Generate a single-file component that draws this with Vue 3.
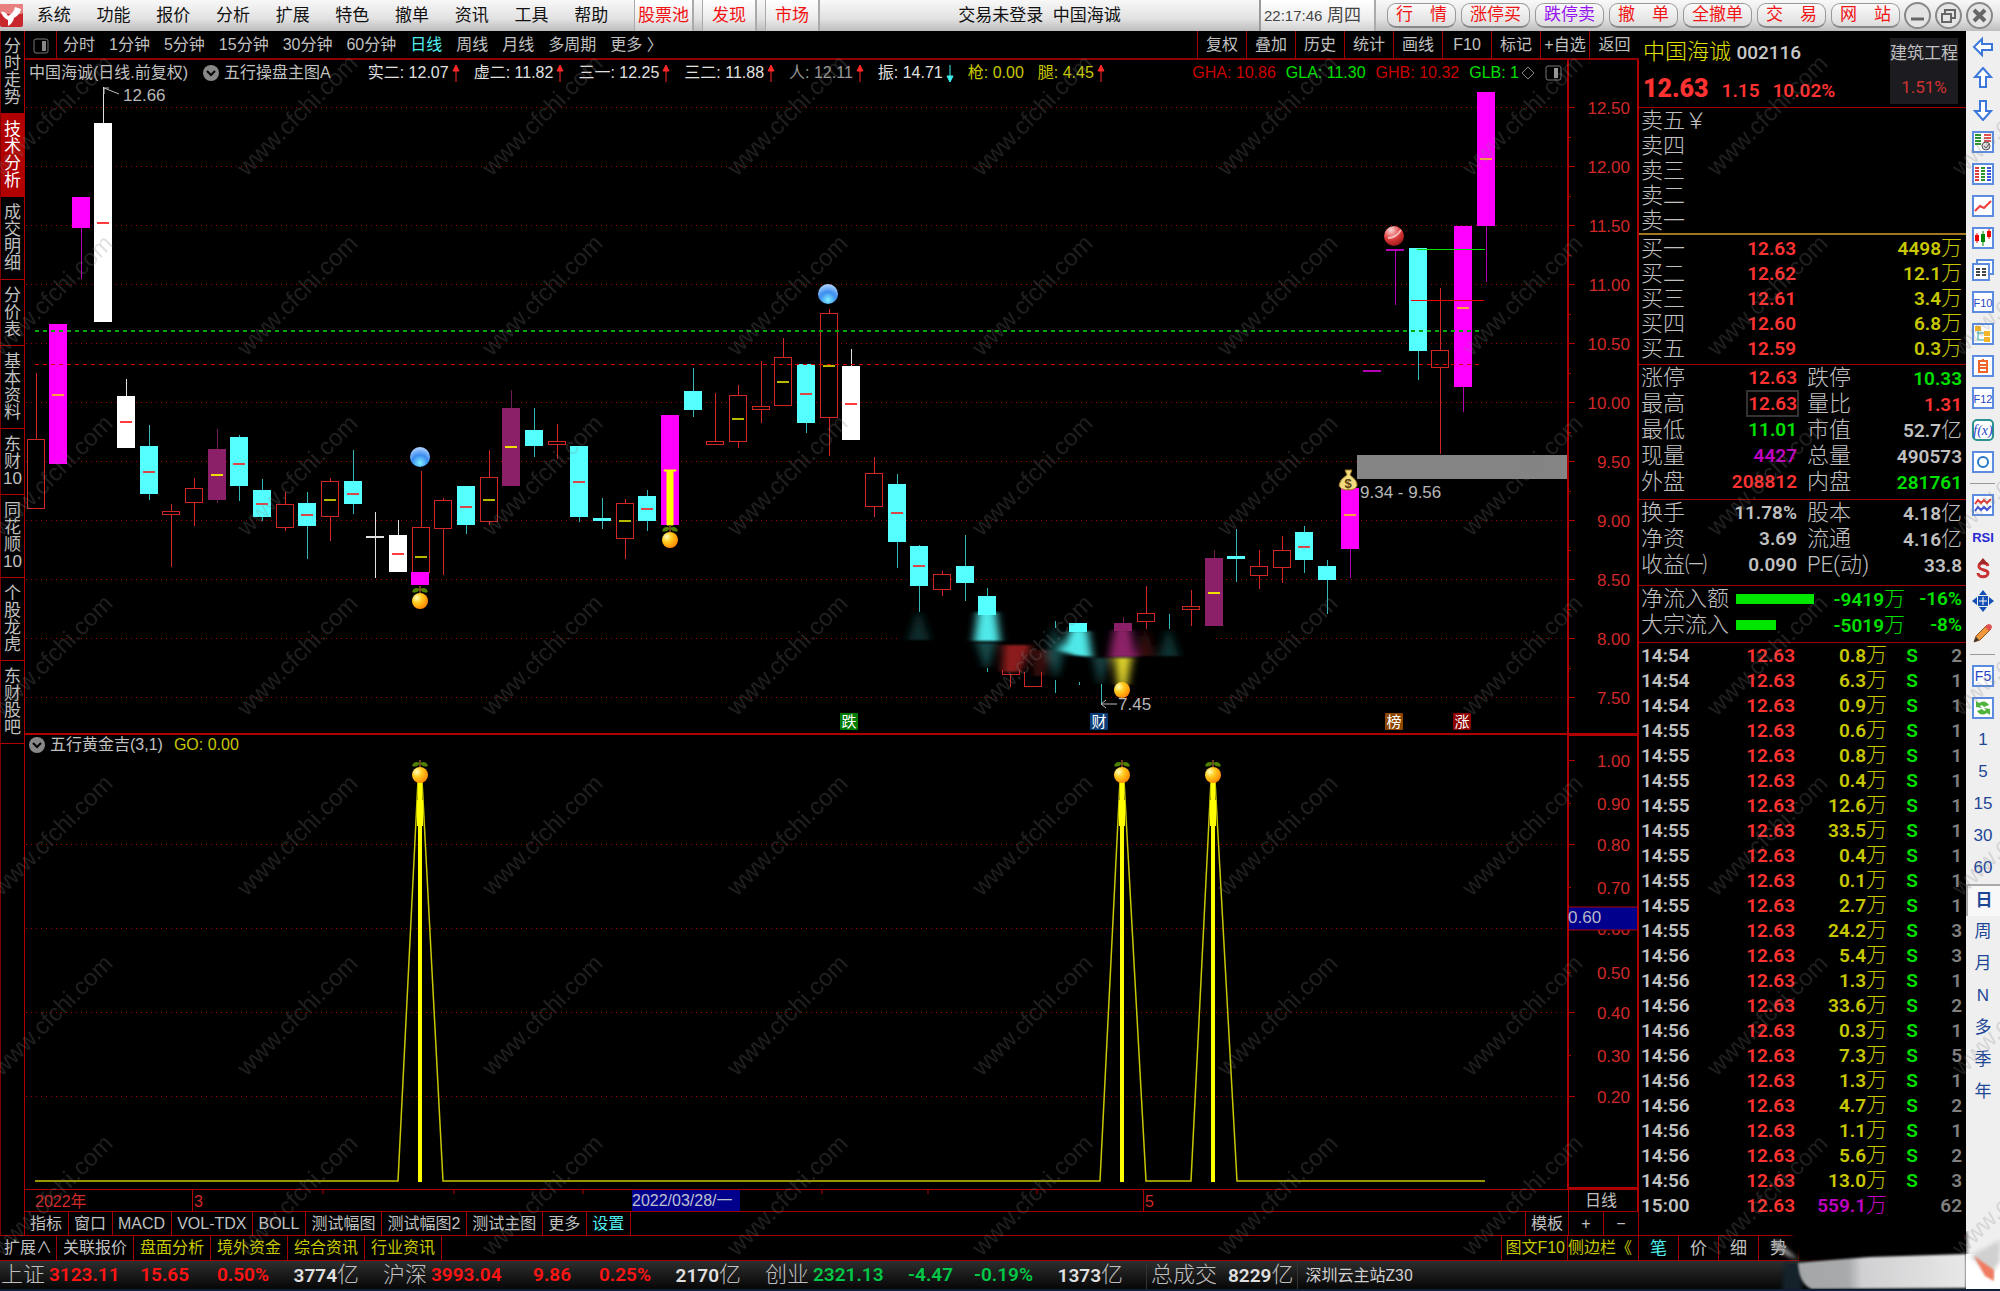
<script setup>
const menus = ['系统', '功能', '报价', '分析', '扩展', '特色', '撤单', '资讯', '工具', '帮助']
const hotMenus = ['股票池', '发现', '市场']
const tradeButtons = [
  { t: '行　情' }, { t: '涨停买' }, { t: '跌停卖', sell: true }, { t: '撤　单' },
  { t: '全撤单' }, { t: '交　易' }, { t: '网　站' },
]
const sideTabs = [
  ['分', '时', '走', '势'], ['技', '术', '分', '析'], ['成', '交', '明', '细'], ['分', '价', '表'],
  ['基', '本', '资', '料'], ['东', '财', '10'], ['同', '花', '顺', '10'], ['个', '股', '龙', '虎'],
  ['东', '财', '股', '吧'],
]
const periods = ['分时', '1分钟', '5分钟', '15分钟', '30分钟', '60分钟', '日线', '周线', '月线', '多周期', '更多 〉']
const tools = ['复权', '叠加', '历史', '统计', '画线', 'F10', '标记', '+自选', '返回']
const readings = [
  { k: '实二', v: '12.07', d: 'up', c: 'white' }, { k: '虚二', v: '11.82', d: 'up', c: 'white' },
  { k: '三一', v: '12.25', d: 'up', c: 'white' }, { k: '三二', v: '11.88', d: 'up', c: 'white' },
  { k: '人', v: '12.11', d: 'up', c: 'dim' }, { k: '振', v: '14.71', d: 'down', c: 'white' },
  { k: '枪', v: '0.00', c: 'yellow' }, { k: '腿', v: '4.45', d: 'up', c: 'yellow' },
]
const bands = [
  { k: 'GHA', v: '10.86', c: 'darkred' }, { k: 'GLA', v: '11.30', c: 'green' },
  { k: 'GHB', v: '10.32', c: 'darkred' }, { k: 'GLB', v: '1', c: 'green' },
]

const CANDLE_START = 35.5
const CANDLE_STEP = 22.66
// index, kind, high, body top, body bottom, low, average mark
const candleRows = [
  [0, 'r', 373, 439, 508, 508], [1, 'm', 324, 324, 463, 463, 394], [2, 'm', 197, 197, 227, 279],
  [3, 'w', 87, 123, 321, 321, 222], [4, 'w', 379, 396, 447, 447, 421], [5, 'c', 425, 446, 493, 500, 471],
  [6, 'r', 504, 511, 514, 567], [7, 'r', 478, 488, 502, 526], [8, 'p', 429, 449, 499, 503, 474],
  [9, 'c', 435, 437, 485, 501, 463], [10, 'c', 479, 490, 516, 521, 503], [11, 'r', 492, 504, 527, 531],
  [12, 'c', 492, 503, 525, 559, 514], [13, 'r', 478, 481, 516, 541, 499], [14, 'c', 450, 481, 503, 514, 493],
  [15, 'w', 512, 536, 537, 578], [16, 'w', 520, 535, 571, 571, 553], [17, 'r', 471, 527, 572, 572, 556],
  [18, 'r', 498, 500, 528, 575], [19, 'c', 486, 486, 524, 534, 506], [20, 'r', 450, 477, 521, 525, 499],
  [21, 'p', 390, 408, 485, 485, 446], [22, 'c', 408, 430, 445, 457], [23, 'r', 424, 441, 444, 459],
  [24, 'c', 446, 446, 516, 522, 481], [25, 'c', 498, 518, 520, 529], [26, 'r', 499, 503, 538, 559, 520],
  [27, 'c', 490, 496, 520, 531, 508], [28, 'm', 415, 415, 524, 524], [29, 'c', 368, 391, 409, 417],
  [30, 'r', 393, 441, 444, 445], [31, 'r', 385, 395, 441, 448, 418], [32, 'r', 361, 406, 409, 423],
  [33, 'r', 338, 357, 405, 405, 381], [34, 'c', 364, 364, 422, 433, 393], [35, 'r', 309, 313, 417, 456, 365],
  [36, 'w', 349, 366, 439, 439, 403], [37, 'r', 457, 473, 506, 517], [38, 'c', 474, 484, 541, 568, 512],
  [39, 'c', 545, 546, 585, 612, 565], [40, 'r', 571, 574, 589, 596], [41, 'c', 535, 566, 582, 601],
  [42, 'c', 588, 596, 613, 613], [46, 'c', 623, 623, 631, 631], [48, 'p', 617, 623, 630, 630],
  [49, 'r', 586, 613, 621, 629], [51, 'r', 590, 606, 609, 626], [52, 'p', 550, 558, 625, 625, 592],
  [53, 'c', 529, 556, 558, 582], [54, 'r', 550, 566, 575, 589], [55, 'r', 536, 550, 567, 583],
  [56, 'c', 526, 532, 559, 573, 546], [57, 'c', 560, 566, 579, 614], [58, 'm', 488, 488, 548, 578, 514],
  [59, 'm', 370, 370, 371, 371], [60, 'm', 249, 249, 250, 305], [61, 'c', 248, 248, 350, 380],
  [62, 'r', 288, 350, 367, 454], [63, 'm', 226, 226, 386, 412, 307], [64, 'm', 92, 92, 225, 282, 158],
]
const fills = { m: '#ff00ff', w: '#ffffff', c: '#54ffff', p: '#8c2068', r: '#000000' }
const wicks = { m: '#b400b4', w: '#e0e0e0', c: '#36b8b8', p: '#6e1c54', r: '#d02626' }
const marks = { m: '#ffa040', w: '#ff3c3c', c: '#d84848', p: '#f0e000', r: '#b8b800' }
const candles = candleRows.map(([i, k, hi, top, bot, lo, mark]) => ({
  i, k, hi, top, bot, lo, mark, x: Math.round(CANDLE_START + i * CANDLE_STEP),
}))

const priceLevels = [
  ['12.50', 107], ['12.00', 166], ['11.50', 225], ['11.00', 284], ['10.50', 343], ['10.00', 402],
  ['9.50', 461], ['9.00', 520], ['8.50', 579], ['8.00', 638], ['7.50', 697],
]
const minorTicks = [137, 196, 255, 314, 373, 432, 491, 550, 609, 668]
const subLevels = [
  ['1.00', 761], ['0.90', 804], ['0.80', 845], ['0.70', 888], ['0.60', 929], ['0.50', 973],
  ['0.40', 1013], ['0.30', 1056], ['0.20', 1097],
]
const subGrid = [845, 929, 1013, 1097]
const spikes = [420, 1122, 1213]
const tags = [
  { x: 849, t: '跌', c: '#007a00' }, { x: 1099, t: '财', c: '#0a3c78' },
  { x: 1394, t: '榜', c: '#8c4600' }, { x: 1462, t: '涨', c: '#8c0000' },
]
const dateTicks = [323, 454, 583, 822, 928, 1037]

const indicatorTabs = ['指标', '窗口', 'MACD', 'VOL-TDX', 'BOLL', '测试幅图', '测试幅图2', '测试主图', '更多', '设置']
const extTabs = ['扩展∧', '关联报价', '盘面分析', '境外资金', '综合资讯', '行业资讯']

const asks = ['卖五', '卖四', '卖三', '卖二', '卖一']
const bids = [
  ['买一', '12.63', '4498', '万'], ['买二', '12.62', '12.1', '万'], ['买三', '12.61', '3.4', '万'],
  ['买四', '12.60', '6.8', '万'], ['买五', '12.59', '0.3', '万'],
]
const stats = [
  ['涨停', '12.63', 'red', '跌停', '10.33', 'green', ''],
  ['最高', '12.63', 'red boxed', '量比', '1.31', 'red', ''],
  ['最低', '11.01', 'green', '市值', '52.7', 'grey', '亿'],
  ['现量', '4427', 'purple', '总量', '490573', 'grey', ''],
  ['外盘', '208812', 'red', '内盘', '281761', 'green', ''],
]
const basics = [
  ['换手', '11.78%', 'grey', '股本', '4.18', 'grey', '亿'],
  ['净资', '3.69', 'grey', '流通', '4.16', 'grey', '亿'],
  ['收益㈠', '0.090', 'grey', 'PE(动)', '33.8', 'grey', ''],
]
const flows = [
  { k: '净流入额', w: 78, v: '-9419', p: '-16%' },
  { k: '大宗流入', w: 40, v: '-5019', p: '-8%' },
]
const ticks = [
  ['14:54', '0.8', 2], ['14:54', '6.3', 1], ['14:54', '0.9', 1], ['14:55', '0.6', 1], ['14:55', '0.8', 1],
  ['14:55', '0.4', 1], ['14:55', '12.6', 1], ['14:55', '33.5', 1], ['14:55', '0.4', 1], ['14:55', '0.1', 1],
  ['14:55', '2.7', 1], ['14:55', '24.2', 3], ['14:56', '5.4', 3], ['14:56', '1.3', 1], ['14:56', '33.6', 2],
  ['14:56', '0.3', 1], ['14:56', '7.3', 5], ['14:56', '1.3', 1], ['14:56', '4.7', 2], ['14:56', '1.1', 1],
  ['14:56', '5.6', 2], ['14:56', '13.0', 3], ['15:00', '559.1', 62],
]
const quoteTabs = ['笔', '价', '细', '势']
const indices = [
  { n: '上证', v: '3123.11', d: '15.65', p: '0.50%', a: '3774', c: 'up' },
  { n: '沪深', v: '3993.04', d: '9.86', p: '0.25%', a: '2170', c: 'up' },
  { n: '创业', v: '2321.13', d: '-4.47', p: '-0.19%', a: '1373', c: 'down' },
]

const frame = '<rect x="1" y="1" width="20" height="20" fill="#fff" stroke="#5b8ce0" stroke-width="2"/>'
const label = (t, size) => `${frame}<text x="11" y="16" text-anchor="middle" font-family="Liberation Sans" font-size="${size}" fill="#2846c8">${t}</text>`
const railIcons = [
  { n: '后退', s: '<path d="M2 11 L10 3 V8 H20 V14 H10 V19 Z" fill="#fff" stroke="#3c78dc" stroke-width="2"/>' },
  { n: '上移', s: '<path d="M11 1 L19 10 H14 V20 H8 V10 H3 Z" fill="#fff" stroke="#3c78dc" stroke-width="2"/>' },
  { n: '下移', s: '<path d="M11 21 L19 12 H14 V2 H8 V12 H3 Z" fill="#fff" stroke="#3c78dc" stroke-width="2"/>' },
  { n: '报价表', s: frame + '<path d="M3 4H9M3 7H9M3 10H9M3 13H9" stroke="#289628" stroke-width="2"/><path d="M12 4H19M12 7H19M12 10H19" stroke="#e05050" stroke-width="2"/><circle cx="14" cy="15" r="4" fill="#ddd" stroke="#555"/><path d="M12 15l2 2 3-4" fill="none" stroke="#555"/>' },
  { n: '多列表', s: frame + '<g fill="none" stroke-width="4" stroke-dasharray="2 1"><path d="M5 4V19" stroke="#e03c3c"/><path d="M11 4V19" stroke="#289628"/><path d="M17 4V19" stroke="#3c50dc"/></g>' },
  { n: '走势', s: frame + '<path d="M3 16 L8 11 L12 13 L19 6" fill="none" stroke="#f03c3c" stroke-width="2"/>' },
  { n: 'K线', s: frame + '<path d="M5 6V16M17 2V12" stroke="#e00" /><path d="M11 4V19" stroke="#080"/><rect x="3" y="8" width="4" height="6" fill="#e00"/><rect x="9" y="7" width="4" height="8" fill="#080"/><rect x="15" y="4" width="4" height="6" fill="#e00"/>' },
  { n: '多窗口', s: '<rect x="5" y="1" width="16" height="14" fill="#fff" stroke="#5b8ce0" stroke-width="2"/><rect x="1" y="5" width="16" height="16" fill="#fff" stroke="#5b8ce0" stroke-width="2"/><path d="M4 10H8M10 10H14M4 13H8M10 13H14M4 16H8M10 16H14" stroke="#444" stroke-width="2"/>' },
  { n: 'F10', s: label('F10', 11) },
  { n: '目录树', s: frame + '<path d="M6 7V17H14M6 10H14" fill="none" stroke="#28a0a0"/><rect x="3" y="3" width="6" height="5" fill="#f5b428"/><rect x="12" y="8" width="6" height="5" fill="#f5b428"/><rect x="12" y="14" width="6" height="5" fill="#f5b428"/>' },
  { n: '自选', s: frame + '<path d="M11 4V6M7 6H15V17H7ZM7 10H15M7 13H15" fill="none" stroke="#f06428" stroke-width="2"/>' },
  { n: 'F12', s: label('F12', 11) },
  { n: '公式', s: '<rect x="1" y="1" width="20" height="20" rx="4" fill="#fff" stroke="#2a9090" stroke-width="2"/><text x="11" y="16" text-anchor="middle" font-family="Liberation Serif" font-style="italic" font-size="14" fill="#2846c8">f(x)</text>' },
  { n: '圆形', s: frame + '<circle cx="11" cy="11" r="5" fill="none" stroke="#2878c8" stroke-width="2"/>' },
  { sep: true },
  { n: '叠加线', s: frame + '<path d="M3 10L6 6L9 9L12 6L15 9L19 5" fill="none" stroke="#e03c3c" stroke-width="2"/><path d="M3 17L6 13L9 16L12 13L15 16L19 12" fill="none" stroke="#3c50dc" stroke-width="2"/>' },
  { n: 'RSI', s: '<text x="11" y="16" text-anchor="middle" font-family="Liberation Sans" font-weight="700" font-size="13" fill="#2828d2">RSI</text>' },
  { n: '美元', s: '<path d="M16 8C15 4 6 4 7 9C8 13 16 11 16 15C16 20 6 20 6 15" fill="none" stroke="#c83232" stroke-width="3"/><path d="M11 0L16 6H6Z" fill="#a02828"/>' },
  { n: '移动', s: '<path d="M11 0L15 5H7ZM11 22L15 17H7ZM0 11L5 7V15ZM22 11L17 7V15Z" fill="#1450b4"/><rect x="6" y="6" width="10" height="10" fill="#1450b4"/><path d="M11 7V15M7 11H15" stroke="#fff"/>' },
  { n: '画笔', s: '<path d="M2 20L4 14L15 3L19 7L8 18Z" fill="#f0963c" stroke="#905020"/><path d="M13 5L15 3Q17 1 19 3T19 7L17 9Z" fill="#e05050"/><path d="M2 20L4 15L7 18Z" fill="#333"/>' },
  { sep: true },
  { n: 'F5', s: label('F5', 14) },
  { n: '刷新', s: frame + '<path d="M4 10V4L7 6Q13 2 17 8L12 10Q10 7 8 9L10 11ZM18 12V18L15 16Q9 20 5 14L10 12Q12 15 14 13L12 11Z" fill="#50b43c"/>' },
  ...['1', '5', '15', '30', '60', '日', '周', '月', 'N', '多', '季', '年'].map((t) => ({ n: t, text: t })),
]
</script>

<template>
  <div class="app">
    <header class="menubar">
      <svg class="logo" viewBox="0 0 23 23" aria-hidden="true">
        <rect width="23" height="23" rx="2" fill="#c8282c" />
        <rect width="23" height="10" rx="2" fill="#e88080" />
        <path d="M1 8 Q5 7 8 12 Q14 9 15 3 L21 5 Q20 11 14 14 Q13 19 8 22 L8 16 Q3 14 1 8Z" fill="#fff" />
      </svg>
      <nav class="menus"><button v-for="m in menus" :key="m">{{ m }}</button></nav>
      <div class="hots"><button v-for="m in hotMenus" :key="m">{{ m }}</button></div>
      <div class="caption">交易未登录&nbsp; 中国海诚</div>
      <div class="clock"><span>22:17:46</span> 周四</div>
      <div class="trades">
        <button v-for="b in tradeButtons" :key="b.t" :class="{ sell: b.sell }">{{ b.t }}</button>
      </div>
      <div class="winbtns">
        <button aria-label="最小化"><svg viewBox="2 2 23 23"><path d="M7 17H20" stroke="#666" stroke-width="3" /></svg></button>
        <button aria-label="还原"><svg viewBox="2 2 23 23"><path d="M10 11V8H20V16H17M7 12H16V20H7Z" fill="none" stroke="#666" stroke-width="2" /></svg></button>
        <button aria-label="关闭"><svg viewBox="2 2 23 23"><path d="M8 8L19 19M19 8L8 19" stroke="#666" stroke-width="4" /></svg></button>
      </div>
    </header>

    <div class="body">
      <div class="left">
        <div class="work">
          <nav class="sidetabs">
            <button v-for="(tab, n) in sideTabs" :key="n" :class="{ on: n === 1 }">
              <span v-for="ch in tab" :key="ch">{{ ch }}</span>
            </button>
          </nav>
          <main class="center">
            <div class="toolbar">
              <button class="split" aria-label="分栏">
                <svg width="18" height="18" viewBox="0 0 18 18"><rect x="2" y="2" width="14" height="14" rx="2" fill="none" stroke="#777" /><rect x="10" y="4" width="4" height="10" fill="#888" /></svg>
              </button>
              <div class="periods">
                <button v-for="p in periods" :key="p" :class="{ on: p === '日线' }">{{ p }}</button>
              </div>
              <div class="tools"><button v-for="t in tools" :key="t">{{ t }}</button></div>
            </div>

            <section class="pane main-pane">
              <div class="legend">
                <span class="symbol">中国海诚(日线.前复权)</span>
                <svg class="chev" viewBox="0 0 16 16" aria-hidden="true"><circle cx="8" cy="8" r="8" fill="#888" /><path d="M4 6L8 10L12 6" fill="none" stroke="#000" stroke-width="2" /></svg>
                <span class="formula">五行操盘主图A</span>
                <div class="readings">
                  <span v-for="r in readings" :key="r.k" :class="r.c">{{ r.k }}: {{ r.v
                    }}<svg v-if="r.d" :class="r.d" width="9" height="18" viewBox="0 0 9 18" aria-hidden="true"><path :d="r.d === 'up' ? 'M5 17V5M2 6L5 0L8 6Z' : 'M5 0V12M2 11L5 17L8 11Z'" stroke="currentColor" fill="currentColor" /></svg></span>
                </div>
                <div class="bands"><span v-for="b in bands" :key="b.k" :class="b.c">{{ b.k }}: {{ b.v }}</span></div>
                <svg class="legend-icons" width="44" height="20" viewBox="0 0 44 20" aria-hidden="true"><path d="M9 4L15 10L9 16L3 10Z" fill="none" stroke="#888" /><rect x="27" y="3" width="15" height="14" rx="2" fill="none" stroke="#777" /><rect x="35" y="5" width="4" height="10" fill="#999" /></svg>
                <div class="axis-head"></div>
              </div>
              <svg class="plot" viewBox="25 86 1614 647" preserveAspectRatio="none">
                <defs>
                  <radialGradient id="blue" cx=".5" cy=".8" r=".8"><stop offset="0" stop-color="#7ff0ff" /><stop offset=".5" stop-color="#3c8cf0" /><stop offset="1" stop-color="#b4d8ff" /></radialGradient>
                  <radialGradient id="orange" cx=".3" cy=".3" r=".8"><stop offset="0" stop-color="#ffffc0" /><stop offset=".4" stop-color="#ffcc20" /><stop offset="1" stop-color="#ff8000" /></radialGradient>
                  <radialGradient id="redball" cx=".35" cy=".2" r=".9"><stop offset="0" stop-color="#ffd8d8" /><stop offset=".5" stop-color="#e04040" /><stop offset="1" stop-color="#901010" /></radialGradient>
                  <filter id="soft" x="-20%" y="-20%" width="140%" height="140%"><feGaussianBlur stdDeviation="4 1" /></filter>
                </defs>
                <g stroke="#a00000" stroke-dasharray="1 4" class="crisp">
                  <path v-for="l in priceLevels" :key="l[0]" :d="`M26 ${l[1] + 0.5}H1562`" />
                </g>
                <g stroke="#b00000" class="crisp">
                  <path d="M1568 86V733" stroke-width="2" />
                  <path d="M1638 86V733" stroke-width="2" />
                  <path v-for="l in priceLevels" :key="l[0]" :d="`M1568 ${l[1] + 0.5}h7`" />
                  <path v-for="t in minorTicks" :key="t" :d="`M1568 ${t + 0.5}h3`" />
                </g>
                <g class="axis-text">
                  <text v-for="l in priceLevels" :key="l[0]" x="1630" :y="l[1] + 7">{{ l[0] }}</text>
                </g>
                <path d="M900 632H1215V646H900Z" fill="#000" />
                <g v-for="c in candles" :key="c.i" class="crisp">
                  <path :d="`M${c.x + 0.5} ${c.hi}V${c.lo}`" :stroke="wicks[c.k]" />
                  <rect v-if="c.k === 'r'" :x="c.x - 8.5" :y="c.top + 0.5" width="17" :height="c.bot - c.top" fill="#000" stroke="#d02626" />
                  <rect v-else :x="c.x - 9" :y="c.top" width="18" :height="c.bot - c.top + 1" :fill="c.bot - c.top < 2 ? wicks[c.k] : fills[c.k]" />
                  <rect v-if="c.mark" :x="c.x - 6" :y="c.mark" width="12" height="2" :fill="marks[c.k]" />
                </g>
                <rect x="411" y="572" width="18" height="13" fill="#f0f" />
                <path d="M664 470H676V471H673V525H667V471H664Z" fill="#ff0" stroke="#ff0" />

                <g filter="url(#soft)">
                  <path d="M917 612H920L930 640H908Z" fill="#0c2a2a" />
                  <path d="M978 612H996L1000 641H974Z" fill="#50e8e8" />
                  <path d="M976 643H996L988 668H985Z" fill="#164848" />
                  <path d="M1003 645H1031L1020 672H1002Z" fill="#8c1c1c" />
                  <path d="M1032 650H1052L1044 676H1034Z" fill="#3a0c0c" />
                  <path d="M1054 624L1064 652L1056 680L1048 655Z" fill="#164848" />
                  <path d="M1070 631H1088L1092 657L1072 655L1062 650Z" fill="#50e8e8" />
                  <path d="M1092 658H1110L1102 684H1099Z" fill="#123c3c" />
                  <path d="M1114 630H1131L1136 657H1109Z" fill="#8c2068" />
                  <path d="M1114 658H1132L1127 685H1118Z" fill="#dcd02c" />
                  <path d="M1143 630H1147L1155 656H1136Z" fill="#340c0c" />
                  <path d="M1167 630H1170L1179 656H1159Z" fill="#0f3232" />
                </g>
                <g class="crisp" fill="#54ffff"><rect x="978" y="606" width="18" height="9" /><rect x="1069" y="624" width="18" height="8" /></g>
                <g fill="none" class="crisp">
                  <path d="M1002 670V674.5H1019V670M1010.5 675V687M1024.5 672V686.5H1041.5V672" stroke="#d02626" />
                  <path d="M987 668V672M1055 621V628M1055 680V693M1079 682V685M1101 684V705M1169 614V629" stroke="#36b8b8" />
                </g>

                <path d="M35 331H1482" stroke="#00a800" stroke-width="2" stroke-dasharray="4 4" class="crisp" />
                <path d="M35 364.5H1482" stroke="#e00000" stroke-dasharray="4 4" class="crisp" />
                <path d="M1417 249.5H1485" stroke="#0d0" class="crisp" />
                <path d="M1411 300.5H1484" stroke="#e00" class="crisp" />
                <rect x="1357" y="455" width="210" height="24" fill="#848484" />

                <circle cx="420" cy="457" r="10" fill="url(#blue)" />
                <circle cx="828" cy="294" r="10" fill="url(#blue)" />
                <circle cx="1394" cy="236" r="10" fill="url(#redball)" />
                <path d="M1388 238Q1396 238 1401 230" fill="none" stroke="#fff" stroke-width="2" opacity=".6" />
                <g v-for="p in [[420, 601], [670, 540]]" :key="p[0]">
                  <path :d="`M${p[0]} ${p[1] - 8}v-7`" stroke="#704020" stroke-width="2" />
                  <path :d="`M${p[0]} ${p[1] - 12}q-6 -3 -8 3q5 2 8 -3q6 -3 8 3q-5 2 -8 -3`" fill="#508000" />
                  <circle :cx="p[0]" :cy="p[1]" r="8" fill="url(#orange)" />
                </g>
                <circle cx="1122" cy="690" r="8" fill="url(#orange)" />
                <g>
                  <path d="M1345 470H1352L1350 475Q1358 481 1357 486Q1355 490 1348 490Q1340 490 1339 485Q1340 479 1347 475Z" fill="#f0dc80" stroke="#a07820" />
                  <text x="1348" y="488" text-anchor="middle" class="bag">$</text>
                </g>
                <g class="notes">
                  <text x="123" y="101">12.66</text>
                  <text x="1360" y="498">9.34 - 9.56</text>
                  <text x="1118" y="710">7.45</text>
                </g>
                <path d="M104 88L119 94M104 88H109M104 88V94M1101 704H1117M1101 704L1106 700M1101 704L1106 708" fill="none" stroke="#bbb" />
                <g v-for="t in tags" :key="t.t" class="tag">
                  <rect :x="t.x - 9" y="713" width="18" height="17" rx="1" :fill="t.c" />
                  <text :x="t.x" y="727">{{ t.t }}</text>
                </g>
              </svg>
            </section>

            <section class="pane sub-pane">
              <div class="legend">
                <svg class="chev" viewBox="0 0 16 16" aria-hidden="true"><circle cx="8" cy="8" r="8" fill="#888" /><path d="M4 6L8 10L12 6" fill="none" stroke="#000" stroke-width="2" /></svg>
                <span class="formula">五行黄金吉(3,1)</span>
                <span class="yellow go">GO: 0.00</span>
                <div class="axis-head"></div>
              </div>
              <svg class="plot" viewBox="25 754 1614 435" preserveAspectRatio="none">
                <g stroke="#a00000" stroke-dasharray="1 4" class="crisp">
                  <path v-for="y in subGrid" :key="y" :d="`M26 ${y - 0.5}H1562`" />
                </g>
                <g stroke="#b00000" class="crisp">
                  <path d="M1568 754V1188H1638V754" fill="none" stroke-width="2" />
                  <path v-for="(l, n) in subLevels" :key="l[0]" :d="`M1568 ${l[1] - 0.5}h${n % 2 ? 3 : 7}`" />
                </g>
                <g class="axis-text"><text v-for="l in subLevels" :key="l[0]" x="1630" :y="l[1] + 6">{{ l[0] }}</text></g>
                <rect x="1569" y="907" width="68" height="23" fill="#00008c" />
                <path d="M1569 907H1637M1569 930H1637" stroke="#b00000" />
                <text x="1568" y="923" class="cursor-text">0.60</text>
                <path d="M35 1181H398L418 780M422 780L443 1181H1100L1120 780M1124 780L1146 1181H1191L1211 780M1215 780L1237 1181H1485" fill="none" stroke="#c8c800" stroke-width="1.5" />
                <g v-for="x in spikes" :key="x">
                  <path :d="`M${x} 780V1182`" stroke="#ff0" stroke-width="4" />
                  <path :d="`M${x} 800V826`" stroke="#ff0" stroke-width="6" />
                  <path :d="`M${x} 767v-7`" stroke="#704020" stroke-width="2" />
                  <path :d="`M${x} 763q-6 -3 -8 3q5 2 8 -3q6 -3 8 3q-5 2 -8 -3`" fill="#508000" />
                  <circle :cx="x" cy="775" r="8" fill="url(#orange)" />
                </g>
              </svg>
            </section>

            <div class="daterow">
              <svg viewBox="25 1190 1543 21" preserveAspectRatio="none">
                <path v-for="t in dateTicks" :key="t" :d="`M${t} 1190v4`" stroke="#b00000" />
                <path d="M192.500 1190V1211M1143.500 1190V1211" stroke="#b00000" />
                <rect x="632" y="1190" width="108" height="21" fill="#00008c" />
                <g class="date-text">
                  <text x="35" y="1207">2022年</text>
                  <text x="194" y="1207">3</text>
                  <text x="1145" y="1207">5</text>
                  <text x="632" y="1206" class="picked">2022/03/28/一</text>
                </g>
              </svg>
              <div class="unit">日线</div>
            </div>
            <div class="tabrow indicators">
              <button v-for="t in indicatorTabs" :key="t" :class="{ cyan: t === '设置' }">{{ t }}</button>
              <button class="push template">模板</button>
              <button class="zoombtn">+</button>
              <button class="zoombtn">−</button>
            </div>
          </main>
        </div>
        <div class="tabrow ext">
          <button v-for="(t, n) in extTabs" :key="t" :class="{ yellow: n > 1 }">{{ t }}</button>
          <button class="push yellow">图文F10</button>
          <button class="yellow fold">侧边栏《</button>
        </div>
      </div>

      <aside class="quote">
        <div class="qhead">
          <div class="qmain">
            <div class="qname">中国海诚 <span>002116</span></div>
            <div class="qprice"><b>12.63</b><span>1.15</span><span>10.02%</span></div>
          </div>
          <div class="sector"><span>建筑工程</span><span class="pct">1.51%</span></div>
        </div>
        <table class="asks"><tbody>
          <tr v-for="(a, n) in asks" :key="a"><th>{{ a }}<template v-if="n === 0">￥</template></th></tr>
        </tbody></table>
        <table class="bids"><tbody>
          <tr v-for="b in bids" :key="b[0]">
            <th>{{ b[0] }}</th><td class="red">{{ b[1] }}</td><td class="yellow">{{ b[2] }}<i>{{ b[3] }}</i></td>
          </tr>
        </tbody></table>
        <table v-for="(grp, g) in [stats, basics]" :key="g" class="stats" :class="{ tall: g === 1 }"><tbody>
          <tr v-for="s in grp" :key="s[0]">
            <th class="k1">{{ s[0] }}</th><td class="v1" :class="s[2]"><span>{{ s[1] }}</span></td>
            <th class="k2">{{ s[3] }}</th><td :class="s[5]">{{ s[4] }}<i>{{ s[6] }}</i></td>
          </tr>
        </tbody></table>
        <table class="flows"><tbody>
          <tr v-for="f in flows" :key="f.k">
            <th>{{ f.k }}</th><td class="barcell"><div class="bar" :style="{ width: f.w + 'px' }"></div></td>
            <td class="amount green">{{ f.v }}<i>万</i></td><td class="green">{{ f.p }}</td>
          </tr>
        </tbody></table>
        <table class="ticks"><tbody>
          <tr v-for="(t, n) in ticks" :key="n">
            <td class="time">{{ t[0] }}</td><td class="red price">12.63</td>
            <td class="vol" :class="n === 22 ? 'purple' : 'yellow'">{{ t[1] }}<i>万</i></td>
            <td class="side green">{{ n === 22 ? '' : 'S' }}</td><td class="cnt">{{ t[2] }}</td>
          </tr>
        </tbody></table>
        <div class="qtabs tabrow"><button v-for="(t, n) in quoteTabs" :key="t" :class="{ cyan: n === 0 }">{{ t }}</button></div>
      </aside>

      <nav class="rail">
        <template v-for="(r, n) in railIcons" :key="n">
          <hr v-if="r.sep" />
          <button v-else :aria-label="r.n" :class="{ pressed: r.text === '日' }">
            <template v-if="r.text">{{ r.text }}</template>
            <svg v-else width="22" height="22" viewBox="0 0 22 22" v-html="r.s"></svg>
          </button>
        </template>
      </nav>
    </div>

    <footer class="status">
      <div v-for="x in indices" :key="x.n" class="index" :class="x.c">
        <span class="nm">{{ x.n }}</span><b>{{ x.v }}</b><b class="r">{{ x.d }}</b><b class="r">{{ x.p }}</b>
        <span class="r amt"><b>{{ x.a }}</b>亿</span>
      </div>
      <div class="total"><span class="nm">总成交</span><span class="amt"><b>8229</b>亿</span></div>
      <div class="host">深圳云主站Z30</div>
    </footer>

    <svg class="smudge" width="240" height="60" viewBox="1760 1231 240 60" aria-hidden="true">
      <defs>
        <linearGradient id="fade" x1="0" x2="1"><stop offset="0" stop-color="#a4a6a8" /><stop offset=".3" stop-color="#a8aaac" /><stop offset=".38" stop-color="#d0d0d2" /><stop offset="1" stop-color="#e8e8e8" /></linearGradient>
        <filter id="smear"><feGaussianBlur stdDeviation="2" /></filter>
        <filter id="edge" x="-5%" y="-10%" width="110%" height="120%"><feGaussianBlur stdDeviation="1" /></filter>
      </defs>
      <path d="M1790 1231H1966V1262H1800Z" fill="#000" filter="url(#smear)" />
      <path d="M1784 1264H1802V1291H1782Z" fill="#14202c" filter="url(#smear)" />
      <path d="M1776 1240L1799 1260L1788 1256L1772 1246Z" fill="#a0a0a0" filter="url(#smear)" />
      <path d="M1798 1263Q1830 1260 1870 1257L1966 1254V1288L1812 1289Q1799 1284 1798 1263Z" fill="url(#fade)" filter="url(#edge)" />
      <path d="M1966 1254H2000V1289H1966Z" fill="#fff" />
      <path d="M1970 1256L2000 1240V1262L1990 1275Z" fill="#d0d0d0" filter="url(#smear)" />
      <path d="M1974 1256L1994 1270V1281L1985 1276Z" fill="#f07a60" filter="url(#edge)" />
    </svg>

    <svg class="watermark" width="100%" height="100%" aria-hidden="true">
      <defs>
        <pattern id="wm" x="174" y="28" width="245" height="180" patternUnits="userSpaceOnUse">
          <text x="124" y="95" text-anchor="middle" transform="rotate(-45 124 88)">www.cfchi.com</text>
        </pattern>
      </defs>
      <rect y="31" width="100%" height="100%" fill="url(#wm)" />
    </svg>
  </div>
</template>

<style>
body { margin: 0; background: #000; }
</style>

<style scoped>
.app {
  position: relative;
  display: flex;
  flex-direction: column;
  min-height: 100vh;
  box-sizing: border-box;
  overflow: hidden;
  background: #000;
  color: #c0c0c0;
  border-bottom: 2px solid #10203a;
  font: 16px/20px "Liberation Sans", "Noto Sans CJK SC", sans-serif;
  white-space: nowrap;
}
button { font: inherit; color: inherit; background: none; border: 0; padding: 0; margin: 0; cursor: pointer; white-space: nowrap; }
table { border-collapse: collapse; width: 100%; table-layout: fixed; }
th, td { padding: 0; }
i { font-style: normal; font-weight: 300; font-size: 21px; }

.white { color: #e0e0e0; }
.dim { color: #999; }
.grey { color: #c0c0c0; }
.red { color: #ff3232; }
.darkred { color: #c80000; }
.green { color: #00e000; }
.yellow { color: #c8c800; }
.cyan { color: #50f0f0; }
.purple { color: #c000c0; }
.crisp { shape-rendering: crispEdges; }

.menubar {
  display: flex;
  align-items: center;
  flex: none;
  height: 31px;
  color: #111;
  background: linear-gradient(#f8f8f8, #e2e2e2 60%, #bdbdbd);
  font-size: 17px;
}
.logo { width: 23px; height: 23px; margin-right: 1px; }
.menus { display: flex; width: 597px; }
.menus button { flex: 1; }
.hots { display: flex; gap: 8px; margin-left: 13px; height: 31px; }
.hots button { box-sizing: border-box; padding: 0 9px; color: #f01414; border-right: 2px solid #aaa; border-left: 1px solid #aaa; background: linear-gradient(#fff, #ececec 60%, #ccc); }
.hots button:first-child { padding: 0 3px; }
.caption { flex: 1; text-align: center; }
.clock { width: 110px; height: 31px; line-height: 31px; padding-left: 3px; border-left: 2px solid #999; border-right: 2px solid #aaa; color: #444; background: linear-gradient(#fff, #eee 60%, #d0d0d0); }
.clock span { font-size: 15px; }
.trades { display: flex; gap: 5px; margin-left: 11px; }
.trades button { width: 69px; height: 25px; border-radius: 9px; border: 1px solid #999; border-bottom: 2px solid #888; color: #f01414; background: linear-gradient(#fafafa, #ddd); }
.trades .sell { color: #9614f0; }
.winbtns { display: flex; gap: 4px; margin: 0 7px 0 4px; }
.winbtns button { width: 27px; height: 27px; box-sizing: border-box; border: 2px solid #888; border-radius: 50%; background: #e4e4e4; }
.winbtns svg { display: block; }

.body { display: flex; flex: 1; }
.left { display: flex; flex-direction: column; flex: 1; min-width: 0; }
.work { display: flex; flex: 1; }
.sidetabs { width: 25px; box-sizing: border-box; border-right: 1px solid #b00000; border-left: 1px solid #800000; flex: none; }
.sidetabs button { display: block; width: 100%; padding: 7px 0; border-bottom: 1px solid #b00000; font-size: 17px; line-height: 17px; }
.sidetabs span { display: block; }
.sidetabs .on { background: #b00000; color: #fff; }
.center { display: flex; flex-direction: column; flex: 1; min-width: 0; }

.toolbar { display: flex; height: 27px; flex: none; border-bottom: 2px solid #900000; line-height: 27px; }
.split { width: 32px; border-right: 1px solid #a00000; }
.split svg { vertical-align: middle; }
.periods { display: flex; gap: 14px; margin-left: 6px; flex: 1; }
.periods .on { color: #50f0f0; }
.tools { display: flex; }
.tools button { width: 49px; box-sizing: border-box; border-left: 1px solid #a00000; }
.tools button:last-child { width: 50px; }

.pane { display: flex; flex-direction: column; }
.main-pane { flex: 673 1 0; }
.sub-pane { flex: 456 1 0; }
.plot { display: block; width: 100%; flex: 1 1 0; min-height: 0; }
.legend { display: flex; align-items: center; height: 26px; flex: none; padding-left: 4px; }
.symbol { width: 174px; }
.chev { width: 16px; height: 16px; margin-right: 5px; flex: none; }
.formula { flex: none; }
.readings { display: flex; gap: 14px; flex: 1; margin-left: 37px; }
.readings svg { margin-left: 2px; vertical-align: middle; color: #ff2828; }
.readings .down { color: #3cf0f0; }
.bands { display: flex; gap: 10px; }
.legend-icons { margin: 0 4px 0 0; }
.axis-head { box-sizing: border-box; align-self: stretch; width: 72px; border-left: 2px solid #b00000; border-right: 2px solid #b00000; flex: none; }
.sub-pane .legend { height: 21px; box-sizing: border-box; border-top: 2px solid #b00000; }
.sub-pane .legend .axis-head { margin-left: auto; border-top: 1px solid #b00000; }
.go { margin-left: 11px; }
.axis-text text { font-size: 17px; fill: #d02828; text-anchor: end; }
.cursor-text { font-size: 17px; fill: #b8b8c8; }
.notes text { font-size: 17px; fill: #b8b8b8; }
.bag { font-size: 13px; font-weight: 700; fill: #604010; }
.tag text { font-size: 15px; fill: #fff; text-anchor: middle; }

.daterow { display: flex; height: 21px; flex: none; border-top: 1px solid #b00000; }
.daterow svg { flex: 1; min-width: 0; height: 100%; }
.date-text text { font-size: 16px; fill: #d02828; }
.date-text .picked { fill: #c0c0d0; }
.unit { width: 71px; box-sizing: border-box; border-left: 1px solid #b00000; border-right: 2px solid #b00000; text-align: center; line-height: 21px; padding-right: 4px; }
.tabrow { display: flex; flex: none; box-sizing: border-box; border-top: 1px solid #a00000; }
.tabrow button { border-right: 1px solid #a00000; }
.indicators { height: 24px; }
.indicators button { padding: 0 6px 0 5px; }
.tabrow .push { margin-left: auto; border-left: 1px solid #a00000; }
.indicators .template { padding: 0 5px; }
.indicators .zoombtn { width: 35px; padding: 0; }
.ext { height: 25px; }
.ext button { padding: 0 6px; }
.ext button:first-child { padding: 0 4px; }
.ext .push { padding: 0 2px 0 3px; }
.ext .fold { width: 71px; padding: 0; text-align: left; overflow: hidden; }

.quote { width: 327px; flex: none; display: flex; flex-direction: column; font-family: Roboto, "Noto Sans CJK SC", sans-serif; font-size: 19px; }
.quote th { font-weight: 300; font-size: 22px; text-align: left; padding-left: 2px; color: #c0c0c0; }
.quote td { font-weight: 600; text-align: right; padding-right: 4px; }
.quote tr { height: 25px; line-height: 25px; }
.quote th, .quote td { line-height: 25px; height: 25px; }
.qhead { display: flex; justify-content: space-between; height: 76px; border-bottom: 1px solid #a00000; padding: 0 8px 0 4px; }
.qname { height: 42px; line-height: 42px; font-size: 22px; color: #e0e000; font-weight: 300; }
.qname span { font-size: 19px; font-weight: 500; color: #c8c8c8; }
.qprice { display: flex; align-items: baseline; gap: 13px; line-height: 32px; color: #ff3232; font-weight: 600; }
.qprice b { font-size: 25px; }
.sector { width: 68px; height: 66px; margin-top: 7px; background: #1c1c20; display: flex; flex-direction: column; gap: 4px; font-size: 17px; line-height: 30px; text-align: center; }
.sector .pct { color: #d03232; }
.asks { border-bottom: 2px solid #a07820; }
.bids { margin-top: 1px; }
.bids th { width: 70px; }
.bids td:nth-child(2) { width: 85px; padding-right: 7px; }
.stats { border-top: 1px solid #a00000; }
.bids + .stats { margin-top: 3px; }
.quote .stats tr, .quote .flows tr { height: 26px; }
.quote .stats th, .quote .stats td, .quote .flows th, .quote .flows td { height: 26px; line-height: 24px; }
.stats .k1 { width: 68px; }
.stats .v1 { width: 88px; }
.quote .stats .k2 { width: 66px; padding-left: 6px; }
.stats .boxed span { box-shadow: 0 0 0 2px #333; }
.quote .stats.tall { margin-top: 4px; }
.flows { border-top: 1px solid #a00000; margin-top: 7px; }
.flows th { width: 95px; }
.flows .barcell { width: 76px; padding: 0; }
.bar { height: 10px; background: #00e600; }
.flows .amount { width: 93px; }
.ticks { border-top: 1px solid #a00000; margin-top: 4px; }
.ticks .time { width: 68px; text-align: left; padding-left: 2px; }
.ticks .price { width: 82px; }
.ticks .vol { width: 88px; }
.quote .ticks .side { width: 40px; padding: 0 0 0 2px; box-sizing: border-box; text-align: center; }
.quote .ticks .cnt { color: #808080; }
.qtabs { margin-top: auto; height: 25px; font-size: 17px; }
.qtabs button { width: 40px; }

.rail { width: 34px; flex: none; box-sizing: border-box; padding-right: 1px; background: #efefef; color: #1e4696; font-size: 17px; }
.rail button { display: flex; align-items: center; justify-content: center; width: 34px; height: 32px; }
.rail button:first-child { height: 31px; }
.rail .pressed { box-sizing: border-box; background: #f8f8f8; border-top: 2px solid #aaa; border-left: 2px solid #aaa; font-weight: 700; }
.rail hr { margin: 5px 4px; border: 0; height: 1px; background: #999; }

.status { display: flex; align-items: center; flex: none; height: 29px; box-sizing: border-box; border-top: 1px solid #a00000; background: linear-gradient(#2e2e2e, #060606); font-family: Roboto, "Noto Sans CJK SC", sans-serif; font-size: 22px; font-weight: 300; line-height: 27px; overflow: hidden; }
.status b { font-size: 19px; font-weight: 600; }
.index { display: grid; grid-template-columns: 48px 68px 72px 80px 90px; width: 381px; padding-left: 1px; }
.r { text-align: right; }
.up b { color: #ff1414; }
.down b { color: #00c846; }
.status .amt b { color: #e0e0e0; }
.total { display: flex; gap: 11px; padding: 0 4px; border-left: 1px solid #333; border-right: 1px solid #333; }
.host { padding-left: 7px; font-size: 16px; font-weight: 400; color: #d0d0d0; }

.smudge { position: absolute; right: 0; bottom: -2px; pointer-events: none; }
.watermark { position: absolute; inset: 0; pointer-events: none; }
.watermark text { font-size: 24px; fill: #808080; fill-opacity: .24; }
</style>
